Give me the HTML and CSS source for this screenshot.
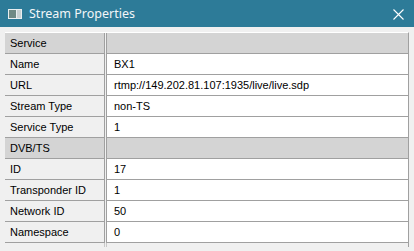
FILE: index.html
```html
<!DOCTYPE html>
<html lang="en">

<head>
  <meta charset="UTF-8">
  <title>Stream Properties</title>
  <link rel="stylesheet" href="styles.css">
</head>

<body>
  <div id="window">
    <div class="titlebar">
      <svg class="app-icon" width="14" height="10" viewBox="0 0 14 10">
        <rect x="0" y="0" width="14" height="10" fill="#e9eef0"/>
        <rect x="1" y="1" width="7" height="8" fill="#6f8a85"/>
        <rect x="9" y="1" width="4" height="8" fill="#c9d2d3"/>
      </svg>
      <span class="title">Stream Properties</span>
      <svg class="close" width="11" height="11" viewBox="0 0 11 11">
        <path d="M0.5 0.5 L10.5 10.5 M10.5 0.5 L0.5 10.5" stroke="#ffffff" stroke-width="1.1" fill="none"/>
      </svg>
    </div>

    <div class="content">
      <div class="table">
        <div class="row group">
          <div class="label">Service</div>
          <div class="value"></div>
        </div>
        <div class="row">
          <div class="label">Name</div>
          <div class="value">BX1</div>
        </div>
        <div class="row">
          <div class="label">URL</div>
          <div class="value">rtmp://149.202.81.107:1935/live/live.sdp</div>
        </div>
        <div class="row">
          <div class="label">Stream Type</div>
          <div class="value">non-TS</div>
        </div>
        <div class="row">
          <div class="label">Service Type</div>
          <div class="value">1</div>
        </div>
        <div class="row group">
          <div class="label">DVB/TS</div>
          <div class="value"></div>
        </div>
        <div class="row">
          <div class="label">ID</div>
          <div class="value">17</div>
        </div>
        <div class="row">
          <div class="label">Transponder ID</div>
          <div class="value">1</div>
        </div>
        <div class="row">
          <div class="label">Network ID</div>
          <div class="value">50</div>
        </div>
        <div class="row">
          <div class="label">Namespace</div>
          <div class="value">0</div>
        </div>
        <div class="filler">
          <div class="label"></div>
          <div class="value"></div>
        </div>
      </div>
    </div>
  </div>
</body>

</html>
```

FILE: styles.css
```css
* {
  margin: 0;
  padding: 0;
  box-sizing: border-box;
}

html, body {
  background-color: #f0f0f0;
  width: 414px;
  height: 251px;
  overflow: hidden;
}

#window {
  display: flex;
  flex-direction: column;
  height: 251px;
}

.titlebar {
  display: flex;
  align-items: center;
  height: 27px;
  padding-left: 8px;
  background-color: #2d7b98;
  color: #f2f6f8;
}

.app-icon {
  margin-top: 1px;
}

.title {
  font-family: "Noto Sans", "Liberation Sans", sans-serif;
  font-size: 12.5px;
  margin-left: 7px;
  flex: 1;
}

.close {
  margin-right: 10px;
  margin-top: 1px;
}

.content {
  flex: 1;
  padding: 5px 5px 4px 5px;
}

.table {
  display: flex;
  flex-direction: column;
  height: 100%;
  border-top: 1px solid #ffffff;
  border-right: 1px solid #a0a0a0;
  font-family: "Liberation Sans", Arial, sans-serif;
  font-size: 11px;
  color: #000;
}

.row {
  display: flex;
  height: 21px;
}

.label {
  width: 100px;
  padding-left: 5px;
  line-height: 20px;
  background-color: #f0f0f0;
  border-bottom: 1px solid #a0a0a0;
  border-right: 1px solid #a0a0a0;
}

.value {
  flex: 1;
  margin-left: 1px;
  padding-left: 7px;
  line-height: 20px;
  background-color: #ffffff;
  border-bottom: 1px solid #a0a0a0;
  border-left: 1px solid #a0a0a0;
}

.group .label, .group .value {
  background-color: #d4d4d4;
}

.filler {
  display: flex;
  flex: 1;
}

.filler .label, .filler .value {
  background-color: #f0f0f0;
  border-bottom: none;
}

.filler .label {
  border-right-color: #c8c8c8;
}

.filler .value {
  border-left-color: #c8c8c8;
}
```
